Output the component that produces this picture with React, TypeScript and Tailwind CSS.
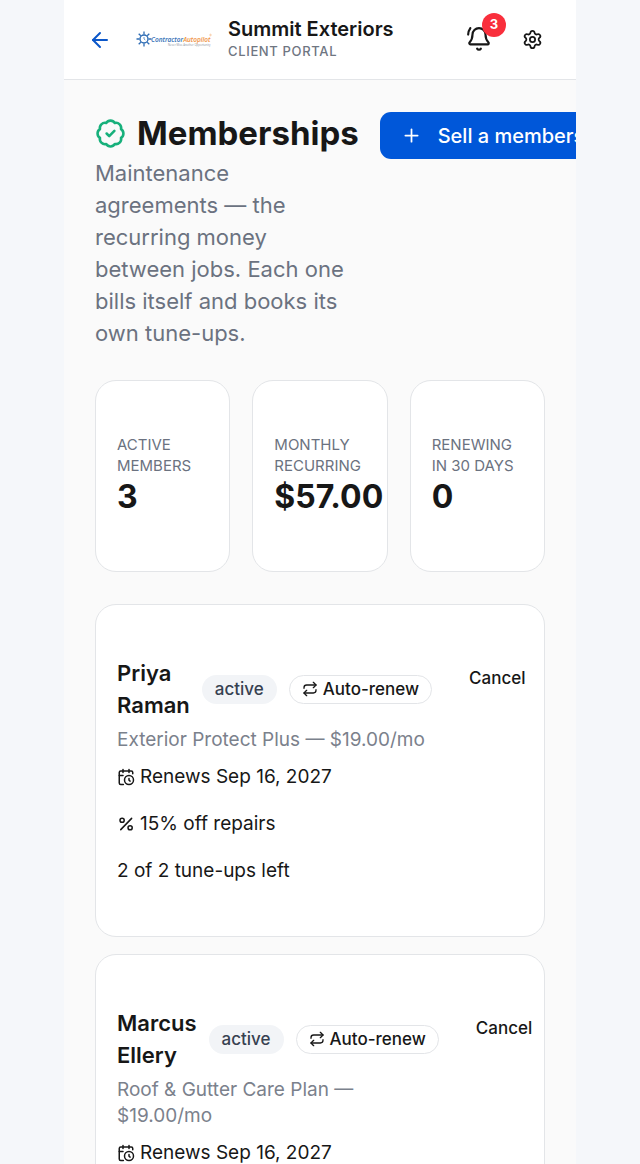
import { ArrowLeft, BadgeCheck, Plus, Repeat, Settings } from "lucide-react"

const stats = [
    { label: "Active members", value: "3" },
    { label: "Monthly recurring", value: "$57.00" },
    { label: "Renewing in 30 days", value: "0" },
]

const members = [
    { name: "Priya Raman", plan: "Exterior Protect Plus — $19.00/mo", renews: "Sep 16, 2027", discount: "15%", visits: "2 of 2" },
    { name: "Marcus Ellery", plan: "Roof & Gutter Care Plan — $19.00/mo", renews: "Sep 16, 2027", discount: "15%", visits: "2 of 2" },
]

const BellIcon = () => {
    return (
        <svg viewBox="0 0 24 24" className="size-[26px]" fill="none" stroke="currentColor" strokeWidth="2" strokeLinecap="round" strokeLinejoin="round">
            <path d="M10.268 20a2 2 0 0 0 3.464 0" />
            <path d="M3.262 14.326A1 1 0 0 0 4 16h16a1 1 0 0 0 .74-1.673C19.41 12.956 18 11.499 18 7A6 6 0 0 0 6 7c0 4.499-1.411 5.956-2.738 7.326" />
            <path d="M4 1C2.8 2.7 2 4.7 2 7" />
        </svg>
    )
}

const CalendarIcon = () => {
    return (
        <svg viewBox="0 0 24 24" className="size-[18px] shrink-0" fill="none" stroke="currentColor" strokeWidth="2" strokeLinecap="round" strokeLinejoin="round">
            <path d="M21 7.5V6a2 2 0 0 0-2-2H5a2 2 0 0 0-2 2v14a2 2 0 0 0 2 2h3.500" />
            <path d="M16 2v4M8 2v4M3 10h5" />
            <path d="M17.500 17.500 16 16.300V14" />
            <circle cx="16" cy="16" r="6" />
        </svg>
    )
}

const PercentIcon = () => {
    return (
        <svg viewBox="0 0 24 24" className="size-[18px] shrink-0" fill="none" stroke="currentColor" strokeWidth="2" strokeLinecap="round">
            <path d="M19.500 4.500 5 19.500" />
            <circle cx="6.800" cy="7" r="2.800" />
            <circle cx="17.500" cy="17" r="2.800" />
        </svg>
    )
}

const Logo = () => {
    return (
        <svg viewBox="0 0 76 18" className="w-[76px] h-[18px] shrink-0" role="img" aria-label="Contractor Autopilot">
            <g stroke="#2f6db5" fill="none">
                <circle cx="8" cy="8" r="4" strokeWidth="1.4" />
                <path d="M8 .5v3M8 12.5v3M.5 8h3M12.5 8h3M2.7 2.7l2.1 2.1M11.2 11.2l2.1 2.1M2.7 13.3l2.1-2.1M11.2 4.8l2.1-2.1" strokeWidth="1.3" />
                <path d="M8 6v2l1.3 1" strokeWidth=".7" />
            </g>
            <text x="15" y="10.5" fontSize="6.5" fontWeight="600" fontStyle="italic" fontFamily="Open Sans, sans-serif">
                <tspan fill="#2f6db5">Contractor</tspan>
                <tspan fill="#ef9040">Autopilot</tspan>
            </text>
            <circle cx="74.5" cy="4" r=".8" fill="none" stroke="#ef9040" strokeWidth=".4" />
            <text x="32" y="15" fontSize="2.8" fill="#8b93a0" fontFamily="Open Sans, sans-serif">Never Miss Another Opportunity</text>
        </svg>
    )
}

const Header = () => {
    return (
        <header className="flex items-center h-20 shrink-0 px-6 bg-white border-b border-[#e3e5e8]">
            <a href="#back" aria-label="Back" className="text-[#0b57c9]">
                <ArrowLeft size={24} strokeWidth={2} />
            </a>
            <div className="ml-6">
                <Logo />
            </div>
            <div className="ml-4 pb-1 flex-1">
                <p className="text-[20px] leading-[26px] font-semibold text-[#171717]">Summit Exteriors</p>
                <p className="text-[13px] leading-[18px] font-medium uppercase tracking-wider text-[#6f7682]">Client Portal</p>
            </div>
            <button aria-label="Notifications" className="relative">
                <BellIcon />
                <span className="absolute -top-3.5 -right-3.5 flex items-center justify-center size-6 rounded-full bg-[#f92f3c] text-white text-[13px] font-bold">3</span>
            </button>
            <button aria-label="Settings" className="ml-[30px] mr-[9px]">
                <Settings size={21} strokeWidth={2} />
            </button>
        </header>
    )
}

const StatCard = ({ label, value }: { label: string; value: string }) => {
    return (
        <div className="px-[21px] py-[53px] bg-white border border-[#e3e5e8] rounded-[21px] min-w-0">
            <p className="text-[15px] leading-[21px] uppercase text-[#6b7280]">{label}</p>
            <p className="text-[32px] leading-[42px] font-bold">{value}</p>
        </div>
    )
}

const MemberCard = ({ member }: { member: (typeof members)[number] }) => {
    return (
        <article className="flex items-start gap-4 px-[21px] py-[52px] bg-white border border-[#e3e5e8] rounded-[21px]">
            <div className="shrink-0 w-min">
                <div className="flex items-center gap-3">
                    <h2 className="w-min text-[22px] leading-[32px] font-semibold">{member.name}</h2>
                    <span className="px-[13px] text-[17px] leading-[29px] font-medium rounded-full bg-[#f2f4f7] text-[#374151]">active</span>
                    <span className="flex items-center gap-[5px] px-3 text-[17px] leading-[27px] font-medium whitespace-nowrap border border-[#e3e5e8] rounded-full">
                        <Repeat size={16} /> Auto-renew
                    </span>
                </div>
                <p className="mt-[6px] text-[19px] leading-[26px] text-[#7b818c]">{member.plan}</p>
                <ul className="flex flex-col gap-[21px] mt-[11px] text-[19px] leading-[26px]">
                    <li className="flex items-center gap-[5px]"><CalendarIcon /> Renews {member.renews}</li>
                    <li className="flex items-center gap-[5px]"><PercentIcon /> {member.discount} off repairs</li>
                    <li>{member.visits} tune-ups left</li>
                </ul>
            </div>
            <button className="px-[21px] text-[17px] leading-[42px] font-medium">Cancel</button>
        </article>
    )
}

const App = () => {
    return (
        <div className="h-screen bg-[#f5f7fa] text-[#171717] font-['Inter',sans-serif]">
            <div className="flex flex-col h-full max-w-lg mx-auto overflow-hidden bg-[#fafafa]">
                <Header />
                <main className="flex-1 min-h-0 px-[31px] py-8 overflow-x-hidden overflow-y-auto [scrollbar-width:none]">
                    <div className="flex items-start gap-[21px]">
                        <div className="w-min">
                            <h1 className="flex items-center gap-[11px] text-[33px] leading-[42px] font-bold">
                                <BadgeCheck size={31} strokeWidth={2} className="shrink-0 text-[#17b07b]" /> Memberships
                            </h1>
                            <p className="mt-[3px] pr-3 text-[22px] leading-[32px] text-[#6b7280]">
                                Maintenance agreements — the recurring money between jobs. Each one bills itself and books its own tune-ups.
                            </p>
                        </div>
                        <button className="flex items-center gap-4 h-[47px] px-[21px] shrink-0 rounded-[11px] bg-[#0057d9] text-white text-[20px] font-medium whitespace-nowrap">
                            <Plus size={21} strokeWidth={2} /> Sell a membership
                        </button>
                    </div>
                    <section className="grid grid-cols-3 gap-[22px] mt-[31px]">
                        {stats.map((stat) => <StatCard key={stat.label} {...stat} />)}
                    </section>
                    <section className="flex flex-col gap-[17px] mt-8">
                        {members.map((member) => <MemberCard key={member.name} member={member} />)}
                    </section>
                </main>
            </div>
        </div>
    )
}

export default App
